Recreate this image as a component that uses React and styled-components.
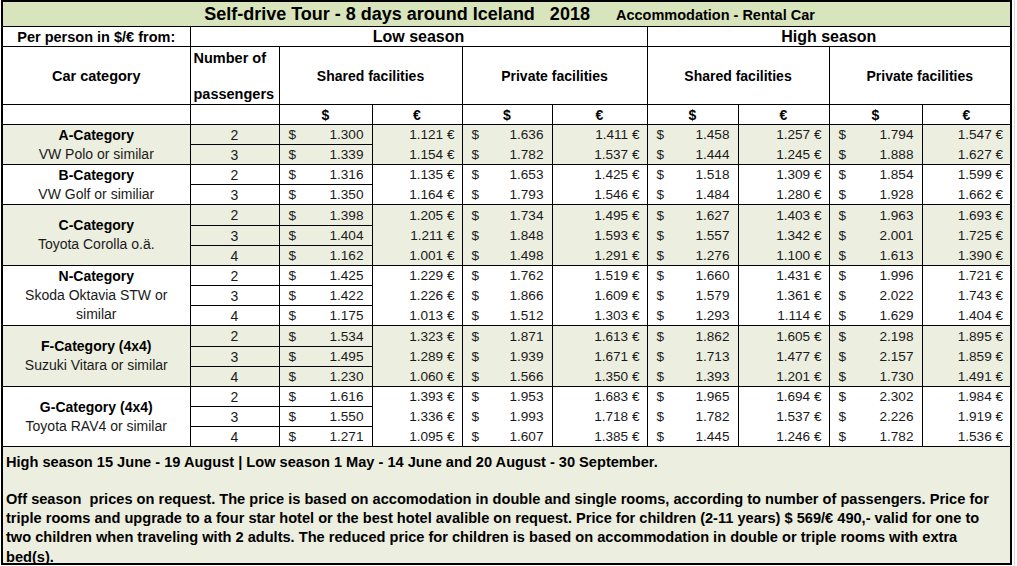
import React from 'react';
import styled, { createGlobalStyle } from 'styled-components';

const GlobalStyle = createGlobalStyle`
  body {
    margin: 0;
    background: #fff;
    font-family: "Liberation Sans", Arial, sans-serif;
    color: #000;
  }
`;

const SHADE = '#eceedf';
const TITLE_BG = '#d8e4bc';

// column widths in px, taken from the sheet
const widths = [188, 89, 93, 90, 90, 95, 91, 91, 93, 89];

const groups = [
  {
    name: 'A-Category',
    model: ['VW Polo or similar'],
    shade: true,
    rows: [
      ['2', '1.300', '1.121', '1.636', '1.411', '1.458', '1.257', '1.794', '1.547'],
      ['3', '1.339', '1.154', '1.782', '1.537', '1.444', '1.245', '1.888', '1.627'],
    ],
  },
  {
    name: 'B-Category',
    model: ['VW Golf or similiar'],
    shade: false,
    rows: [
      ['2', '1.316', '1.135', '1.653', '1.425', '1.518', '1.309', '1.854', '1.599'],
      ['3', '1.350', '1.164', '1.793', '1.546', '1.484', '1.280', '1.928', '1.662'],
    ],
  },
  {
    name: 'C-Category',
    model: ['Toyota Corolla o.ä.'],
    shade: true,
    tall: true,
    rows: [
      ['2', '1.398', '1.205', '1.734', '1.495', '1.627', '1.403', '1.963', '1.693'],
      ['3', '1.404', '1.211', '1.848', '1.593', '1.557', '1.342', '2.001', '1.725'],
      ['4', '1.162', '1.001', '1.498', '1.291', '1.276', '1.100', '1.613', '1.390'],
    ],
  },
  {
    name: 'N-Category',
    model: ['Skoda Oktavia STW or', 'similar'],
    shade: false,
    rows: [
      ['2', '1.425', '1.229', '1.762', '1.519', '1.660', '1.431', '1.996', '1.721'],
      ['3', '1.422', '1.226', '1.866', '1.609', '1.579', '1.361', '2.022', '1.743'],
      ['4', '1.175', '1.013', '1.512', '1.303', '1.293', '1.114', '1.629', '1.404'],
    ],
  },
  {
    name: 'F-Category (4x4)',
    model: ['Suzuki Vitara or similar'],
    shade: true,
    tall: true,
    rows: [
      ['2', '1.534', '1.323', '1.871', '1.613', '1.862', '1.605', '2.198', '1.895'],
      ['3', '1.495', '1.289', '1.939', '1.671', '1.713', '1.477', '2.157', '1.859'],
      ['4', '1.230', '1.060', '1.566', '1.350', '1.393', '1.201', '1.730', '1.491'],
    ],
  },
  {
    name: 'G-Category (4x4)',
    model: ['Toyota RAV4 or similar'],
    shade: false,
    rows: [
      ['2', '1.616', '1.393', '1.953', '1.683', '1.965', '1.694', '2.302', '1.984'],
      ['3', '1.550', '1.336', '1.993', '1.718', '1.782', '1.537', '2.226', '1.919'],
      ['4', '1.271', '1.095', '1.607', '1.385', '1.445', '1.246', '1.782', '1.536'],
    ],
  },
];

const App = () => {
  return (
    <>
      <GlobalStyle />
      <Sheet>
        <Table>
          <colgroup>
            {widths.map((w, i) => (
              <Col key={i} $w={w} />
            ))}
          </colgroup>
          <tbody>
            <tr>
              <TitleCell colSpan={10}>
                <TitleLine>
                  <MainTitle>{'Self-drive Tour - 8 days around Iceland   2018'}</MainTitle>
                  <SubTitle>Accommodation - Rental Car</SubTitle>
                </TitleLine>
              </TitleCell>
            </tr>
            <SmallRow>
              <HeadCell>Per person in $/€ from:</HeadCell>
              <SeasonCell colSpan={5}>Low season</SeasonCell>
              <SeasonCell colSpan={4}>High season</SeasonCell>
            </SmallRow>
            <HeadRow>
              <HeadCell>Car category</HeadCell>
              <HeadCell>
                <Stacked>
                  <span>Number of</span>
                  <span>passengers</span>
                </Stacked>
              </HeadCell>
              <FacilityCell colSpan={2}>Shared facilities</FacilityCell>
              <FacilityCell colSpan={2}>Private facilities</FacilityCell>
              <FacilityCell colSpan={2}>Shared facilities</FacilityCell>
              <FacilityCell colSpan={2}>Private facilities</FacilityCell>
            </HeadRow>
            <SmallRow>
              <HeadCell />
              <HeadCell />
              {['$', '€', '$', '€', '$', '€', '$', '€'].map((c, i) => (
                <CurrencyCell key={i}>{c}</CurrencyCell>
              ))}
            </SmallRow>
            {groups.map((g) =>
              g.rows.map((r, ri) => (
                <DataRow key={g.name + ri} $shade={g.shade} $tall={g.tall && ri === 0}>
                  {ri === 0 && (
                    <CatCell rowSpan={g.rows.length}>
                      <CatName>{g.name}</CatName>
                      {g.model.map((m) => (
                        <CatModel key={m}>{m}</CatModel>
                      ))}
                    </CatCell>
                  )}
                  <PaxCell $line>{r[0]}</PaxCell>
                  {r.slice(1).map((v, vi) =>
                    vi % 2 === 0 ? (
                      <UsdCell key={vi} $line={ri === 0 || vi === 0}>
                        <Money>
                          <span>$</span>
                          <span>{v}</span>
                        </Money>
                      </UsdCell>
                    ) : (
                      <EurCell key={vi} $line={ri === 0}>
                        {v} €
                      </EurCell>
                    )
                  )}
                </DataRow>
              ))
            )}
            <tr>
              <NoteCell colSpan={10}>
                <NoteBody>
                  <NoteLead>
                    High season 15 June - 19 August | Low season 1 May - 14 June and 20 August - 30 September.
                  </NoteLead>
                  <NoteText>
                    {'Off season  prices on request. The price is based on accomodation in double and single rooms, according to number of passengers. Price for'}
                    <br />
                    triple rooms and upgrade to a four star hotel or the best hotel avalible on request. Price for children (2-11 years) $ 569/€ 490,- valid for one to
                    <br />
                    two children when traveling with 2 adults. The reduced price for children is based on accommodation in double or triple rooms with extra
                    <br />
                    bed(s).
                  </NoteText>
                </NoteBody>
              </NoteCell>
            </tr>
          </tbody>
        </Table>
        <Gutter />
      </Sheet>
    </>
  );
};

export default App;

const Sheet = styled.div`
  display: flex;
  align-items: stretch;
  width: 1017px;
  height: 566px;
  overflow: hidden;
`;

const Gutter = styled.div`
  flex: 1;
  background: linear-gradient(to right, #fff 2px, #d4d6d8 2px, #d4d6d8 3px, #fff 3px);
`;

const Table = styled.table`
  table-layout: fixed;
  border-collapse: collapse;
  width: 1011px;
  margin: 0 0 0 1px;
  border: 2px solid #000;
  align-self: flex-start;
`;

const Col = styled.col`
  width: ${(p) => p.$w}px;
`;

const Cell = styled.td`
  padding: 0;
  border: 1px solid #000;
  font-size: 14px;
  white-space: nowrap;
  overflow: hidden;
`;

const TitleCell = styled(Cell)`
  height: 24px;
  background: ${TITLE_BG};
  padding: 0;
`;

const TitleLine = styled.div`
  display: flex;
  align-items: baseline;
  justify-content: center;
  gap: 26px;
  padding-left: 6px;
  font-weight: bold;
  white-space: pre;
`;

const MainTitle = styled.span`
  font-size: 18px;
`;

const SubTitle = styled.span`
  font-size: 14.5px;
`;

const SmallRow = styled.tr`
  height: 20px;
`;

const HeadRow = styled.tr`
  height: 58px;
`;

const HeadCell = styled(Cell)`
  font-weight: bold;
  font-size: 14.5px;
  text-align: center;
  vertical-align: middle;
`;

const Stacked = styled.div`
  display: flex;
  flex-direction: column;
  justify-content: space-between;
  align-items: flex-start;
  height: 56px;
  padding: 1px 0 0 3px;
  box-sizing: border-box;
  line-height: 19px;
`;

const SeasonCell = styled(Cell)`
  font-weight: bold;
  font-size: 16px;
  text-align: center;
`;

const FacilityCell = styled(Cell)`
  font-weight: bold;
  text-align: center;
`;

const CurrencyCell = styled(Cell)`
  font-weight: bold;
  text-align: center;
  font-size: 14px;
`;

const DataRow = styled.tr`
  height: ${(p) => (p.$tall ? 21 : 20)}px;
  background: ${(p) => (p.$shade ? SHADE : '#fff')};
`;

const DataCell = styled(Cell)`
  border-top: ${(p) => (p.$line ? '1px solid #000' : 'hidden')};
  border-bottom: none;
  color: #1a1a1a;
  font-size: 13.6px;
`;

const CatCell = styled(Cell)`
  border-top: 1px solid #000;
  text-align: center;
  vertical-align: middle;
  line-height: 19px;
  font-size: 14px;
`;

const CatName = styled.div`
  font-weight: bold;
`;

const CatModel = styled.div`
  color: #1a1a1a;
`;

const PaxCell = styled(DataCell)`
  text-align: center;
  font-size: 14px;
`;

const UsdCell = styled(DataCell)``;

const Money = styled.div`
  display: flex;
  justify-content: space-between;
  padding: 0 8px 0 9px;
`;

const EurCell = styled(DataCell)`
  text-align: right;
  padding-right: 7px;
`;

const NoteCell = styled(Cell)`
  background: ${SHADE};
  vertical-align: top;
  padding: 0 4px 0 3px;
  font-weight: bold;
  font-size: 14.6px;
  overflow: visible;
`;

const NoteBody = styled.div`
  height: 116px;
  padding-top: 5px;
  box-sizing: border-box;
`;

const NoteLead = styled.div`
  line-height: 20px;
`;

const NoteText = styled.div`
  margin-top: 18px;
  line-height: 19.2px;
  white-space: pre;
`;
